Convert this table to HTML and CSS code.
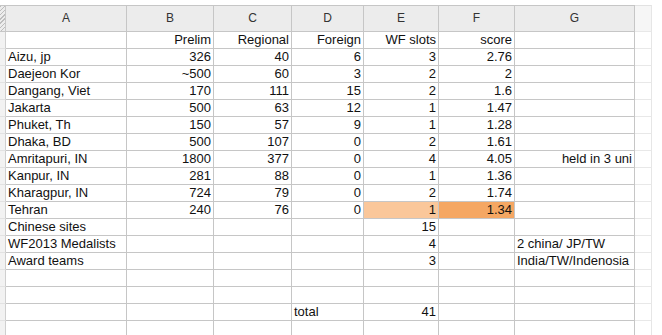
FILE: index.html
```html
<!DOCTYPE html>
<html>
<head>
<meta charset="utf-8">
<link rel="stylesheet" href="styles.css">
</head>
<body>
<div class="sheet">
  <div class="c hatch hd"></div><div class="c hd">A</div><div class="c hd">B</div><div class="c hd">C</div><div class="c hd">D</div><div class="c hd">E</div><div class="c hd">F</div><div class="c hd">G</div><div class="c hd fade"></div>

  <div class="c rh"></div><div class="c"></div><div class="c n">Prelim</div><div class="c n">Regional</div><div class="c n">Foreign</div><div class="c n">WF slots</div><div class="c n">score</div><div class="c"></div><div class="c fade"></div>

  <div class="c rh"></div><div class="c">Aizu, jp</div><div class="c n">326</div><div class="c n">40</div><div class="c n">6</div><div class="c n">3</div><div class="c n">2.76</div><div class="c"></div><div class="c fade"></div>

  <div class="c rh"></div><div class="c">Daejeon Kor</div><div class="c n">~500</div><div class="c n">60</div><div class="c n">3</div><div class="c n">2</div><div class="c n">2</div><div class="c"></div><div class="c fade"></div>

  <div class="c rh"></div><div class="c">Dangang, Viet</div><div class="c n">170</div><div class="c n">111</div><div class="c n">15</div><div class="c n">2</div><div class="c n">1.6</div><div class="c"></div><div class="c fade"></div>

  <div class="c rh"></div><div class="c">Jakarta</div><div class="c n">500</div><div class="c n">63</div><div class="c n">12</div><div class="c n">1</div><div class="c n">1.47</div><div class="c"></div><div class="c fade"></div>

  <div class="c rh"></div><div class="c">Phuket, Th</div><div class="c n">150</div><div class="c n">57</div><div class="c n">9</div><div class="c n">1</div><div class="c n">1.28</div><div class="c"></div><div class="c fade"></div>

  <div class="c rh"></div><div class="c">Dhaka, BD</div><div class="c n">500</div><div class="c n">107</div><div class="c n">0</div><div class="c n">2</div><div class="c n">1.61</div><div class="c"></div><div class="c fade"></div>

  <div class="c rh"></div><div class="c">Amritapuri, IN</div><div class="c n">1800</div><div class="c n">377</div><div class="c n">0</div><div class="c n">4</div><div class="c n">4.05</div><div class="c n">held in 3 uni</div><div class="c fade"></div>

  <div class="c rh"></div><div class="c">Kanpur, IN</div><div class="c n">281</div><div class="c n">88</div><div class="c n">0</div><div class="c n">1</div><div class="c n">1.36</div><div class="c"></div><div class="c fade"></div>

  <div class="c rh"></div><div class="c">Kharagpur, IN</div><div class="c n">724</div><div class="c n">79</div><div class="c n">0</div><div class="c n">2</div><div class="c n">1.74</div><div class="c"></div><div class="c fade"></div>

  <div class="c rh"></div><div class="c">Tehran</div><div class="c n">240</div><div class="c n">76</div><div class="c n">0</div><div class="c n peach">1</div><div class="c n orange">1.34</div><div class="c"></div><div class="c fade"></div>

  <div class="c rh"></div><div class="c">Chinese sites</div><div class="c"></div><div class="c"></div><div class="c"></div><div class="c n">15</div><div class="c"></div><div class="c"></div><div class="c fade"></div>

  <div class="c rh"></div><div class="c">WF2013 Medalists</div><div class="c"></div><div class="c"></div><div class="c"></div><div class="c n">4</div><div class="c"></div><div class="c">2 china/ JP/TW</div><div class="c fade"></div>

  <div class="c rh"></div><div class="c">Award teams</div><div class="c"></div><div class="c"></div><div class="c"></div><div class="c n">3</div><div class="c"></div><div class="c">India/TW/Indenosia</div><div class="c fade"></div>

  <div class="c rh"></div><div class="c"></div><div class="c"></div><div class="c"></div><div class="c"></div><div class="c"></div><div class="c"></div><div class="c"></div><div class="c fade"></div>

  <div class="c rh"></div><div class="c"></div><div class="c"></div><div class="c"></div><div class="c"></div><div class="c"></div><div class="c"></div><div class="c"></div><div class="c fade"></div>

  <div class="c rh"></div><div class="c"></div><div class="c"></div><div class="c"></div><div class="c">total</div><div class="c n">41</div><div class="c"></div><div class="c"></div><div class="c fade"></div>

  <div class="c rh"></div><div class="c"></div><div class="c"></div><div class="c"></div><div class="c"></div><div class="c"></div><div class="c"></div><div class="c"></div><div class="c fade"></div>
</div>
</body>
</html>
```
FILE: styles.css
```css
html, body {
  margin: 0;
  padding: 0;
  background: #ffffff;
}
body {
  padding-top: 5px;
  font-family: "Liberation Sans", Arial, sans-serif;
  font-size: 13px;
  color: #111;
  overflow: hidden;
}
.sheet {
  display: grid;
  grid-template-columns: 6px 121px 87px 78px 72px 75px 76px 120px 17px;
  grid-auto-rows: 17px;
  grid-template-rows: 27px;
}
.c {
  box-sizing: border-box;
  border-right: 1px solid #c6c6c6;
  border-bottom: 1px solid #c6c6c6;
  padding: 0 2px 0 2px;
  line-height: 16px;
  white-space: nowrap;
  overflow: visible;
}
.n {
  text-align: right;
}
.hd {
  background: #ececec;
  border-top: 1px solid #c6c6c6;
  text-align: center;
  line-height: 25px;
  font-size: 12px;
  color: #333;
}
.hatch {
  padding: 0;
  border-right: 1px solid #c8c8c8;
  background: repeating-linear-gradient(135deg, #bdbdbd 0 1px, #ececec 1px 3px);
}
.rh {
  padding: 0;
  background: #f2f2f2;
  border-bottom: 1px solid #e2e2e2;
  border-right: 1px solid #cfcfcf;
}
.fade {
  border-bottom-color: #e8e8e8;
  border-right-color: #e6e6e6;
}
.hd.fade {
  background: #f6f6f6;
  border-top-color: #e2e2e2;
}
.peach {
  background: #fac79a;
}
.orange {
  background: #f5a763;
}
```
